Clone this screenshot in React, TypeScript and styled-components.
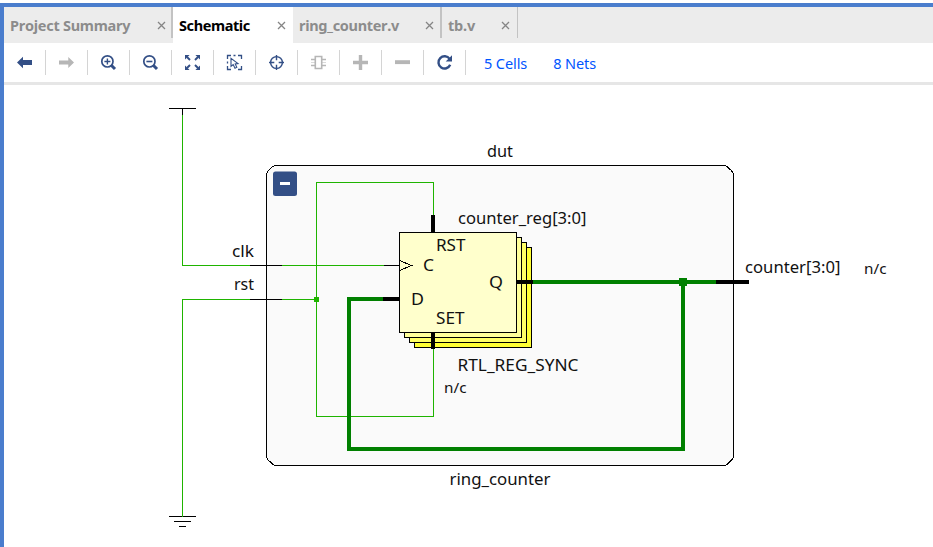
import React from "react";
import styled, { createGlobalStyle } from "styled-components";

const GlobalStyle = createGlobalStyle`
  html, body { margin: 0; padding: 0; background: #fff; overflow: hidden; }
  * { box-sizing: border-box; }
`;

const NAVY = "#334f86";
const GREY = "#b6b6b6";
const WIRE = "#1fb400";
const BUS = "#008000";

const Window = styled.main`
  display: flex;
  flex-direction: column;
  width: 933px;
  height: 544px;
  margin-top: 3px;
  border-top: 4px solid #4a7dcd;
  border-left: 4px solid #4a7dcd;
  background: #fff;
  font-family: "Noto Sans", "Open Sans", sans-serif;
`;

const TabBar = styled.nav`
  display: flex;
  flex: 0 0 36px;
  background: #ececec;
`;

const TabItem = styled.div<{ $width: number; $end: number; $active?: boolean }>`
  display: flex;
  align-items: center;
  justify-content: space-between;
  width: ${(p) => p.$width}px;
  height: 36px;
  padding: 0 ${(p) => p.$end}px 0 6px;
  background: ${(p) => (p.$active ? "#fff" : "transparent")};
  color: ${(p) => (p.$active ? "#000" : "#8c8c8c")};
`;

const TabLabel = styled.span<{ $spacing: number }>`
  font-size: 14.5px;
  font-weight: 700;
  line-height: 20px;
  white-space: nowrap;
  letter-spacing: ${(p) => p.$spacing}px;
  font-kerning: none;
`;

const CloseIcon = styled.svg`
  width: 9px;
  height: 9px;
  margin-top: 1px;
  flex: none;
`;

const TabDivider = styled.div<{ $width: number }>`
  width: ${(p) => p.$width}px;
  height: 31px;
  background: #c3c3c3;
`;

const Toolbar = styled.div`
  display: flex;
  align-items: center;
  flex: 0 0 42px;
  border-bottom: 3px solid #e6e6e6;
`;

const ToolButton = styled.button`
  display: flex;
  align-items: center;
  justify-content: center;
  width: 42px;
  height: 25px;
  padding: 0;
  border: 0;
  border-right: 1px solid #d4d4d4;
  background: none;
`;

const ToolIcon = styled.svg`
  width: 17px;
  height: 17px;
  display: block;
`;

const StatLink = styled.a<{ $left: number }>`
  margin: 0 0 0 ${(p) => p.$left}px;
  color: #0055ff;
  font-size: 14.5px;
  line-height: 20px;
  white-space: nowrap;
  letter-spacing: -0.1px;
`;

const Canvas = styled.svg`
  display: block;
  width: 929px;
  height: 462px;
  flex: none;
`;

const Lines = styled.g`
  shape-rendering: crispEdges;
  fill: none;
`;

const Label = styled.text<{ $small?: boolean }>`
  font-family: "Noto Sans", "Open Sans", sans-serif;
  font-size: ${(p) => (p.$small ? 14 : 16.5)}px;
  fill: #111;
`;

function Close() {
  return (
    <CloseIcon viewBox="0 0 9 9">
      <path d="M1 1 L8 8 M8 1 L1 8" stroke="#858585" strokeWidth="1.3" fill="none" />
    </CloseIcon>
  );
}

const tools: { name: string; art: React.ReactNode }[] = [
  { name: "Back", art: <path d="M1 8.5 L7 2.8 V6 H16 V11 H7 V14.2 Z" fill={NAVY} /> },
  { name: "Forward", art: <path d="M16 8.5 L10.3 3 V6.4 H1 V10.6 H10.3 V14 Z" fill={GREY} /> },
  {
    name: "Zoom in",
    art: (
      <g fill="none" stroke={NAVY}>
        <circle cx="7.4" cy="7.4" r="5.6" strokeWidth="1.7" />
        <path d="M11.5 11.5 L15 15" strokeWidth="3" />
        <path d="M4.4 7.5 H10.4 M7.4 4.5 V10.5" strokeWidth="1.4" />
      </g>
    ),
  },
  {
    name: "Zoom out",
    art: (
      <g fill="none" stroke={NAVY}>
        <circle cx="7.4" cy="7.4" r="5.6" strokeWidth="1.7" />
        <path d="M11.5 11.5 L15 15" strokeWidth="3" />
        <path d="M4.4 7.5 H10.4" strokeWidth="1.6" />
      </g>
    ),
  },
  {
    name: "Zoom fit",
    art: (
      <g fill={NAVY} stroke={NAVY}>
        <path d="M1 1 H5.6 L1 5.6 Z M16 1 V5.6 L11.4 1 Z M1 16 V11.4 L5.6 16 Z M16 16 H11.4 L16 11.4 Z" stroke="none" />
        <path d="M3 3 L6 6 M14 3 L11 6 M3 14 L6 11 M14 14 L11 11" strokeWidth="1.9" />
      </g>
    ),
  },
  {
    name: "Select area",
    art: (
      <g fill="none" stroke={NAVY} strokeWidth="1.3">
        <path d="M1.5 5 V1.5 H5 M12 1.5 H15.5 V5 M1.5 12 V15.5 H5 M12 15.5 H15.5 V12 M7.5 1.5 H9.5 M1.5 7.5 V9.5" />
        <path d="M5 4.3 V12.3 L7.2 10.6 L9 14.2 L10.8 13.3 L9.2 9.9 L12 9.6 Z" strokeWidth="1.1" />
      </g>
    ),
  },
  {
    name: "Auto fit selection",
    art: (
      <g fill="none" stroke={NAVY} strokeWidth="1.4">
        <circle cx="8.5" cy="8.5" r="5.9" />
        <path d="M8.5 1 V6.3 M8.5 10.7 V16 M1 8.5 H6.3 M10.7 8.5 H16" />
      </g>
    ),
  },
  {
    name: "Cell",
    art: (
      <g fill="none" stroke={GREY}>
        <path d="M5.3 2.5 H11.7 V14.5 H5.3 Z" strokeWidth="1.6" />
        <path d="M1 5.4 H5 M1 11.6 H5 M12 5.4 H16 M12 11.6 H16" strokeWidth="1.5" />
        <path d="M1 8.5 H5 M12 8.5 H16" strokeWidth="1" strokeOpacity="0.5" />
      </g>
    ),
  },
  { name: "Add", art: <path d="M1 6.8 H6.8 V1 H10.2 V6.8 H16 V10.2 H10.2 V16 H6.8 V10.2 H1 Z" fill={GREY} /> },
  { name: "Remove", art: <path d="M1 6.2 H16 V10.1 H1 Z" fill={GREY} /> },
  {
    name: "Refresh",
    art: (
      <g>
        <path d="M13.6 4.9 A6.1 6.1 0 1 0 14.2 10.8" fill="none" stroke={NAVY} strokeWidth="2.4" />
        <path d="M16 1.3 V7.6 H9.7 Z" fill={NAVY} />
      </g>
    ),
  },
];

const registerLayers = [
  { offset: 15, fill: "#ffff33" },
  { offset: 10, fill: "#ffff66" },
  { offset: 5, fill: "#ffff99" },
  { offset: 0, fill: "#ffffcc" },
];

const labels: { text: string; x: number; y: number; width: number; small?: boolean }[] = [
  { text: "dut", x: 487, y: 157, width: 26 },
  { text: "clk", x: 232, y: 257, width: 22 },
  { text: "rst", x: 234, y: 290, width: 20 },
  { text: "counter_reg[3:0]", x: 458, y: 224, width: 128.5 },
  { text: "RST", x: 436, y: 251, width: 29.5 },
  { text: "C", x: 423, y: 271, width: 11 },
  { text: "Q", x: 489, y: 288, width: 14 },
  { text: "D", x: 411, y: 305, width: 13 },
  { text: "SET", x: 436, y: 324, width: 28.5 },
  { text: "RTL_REG_SYNC", x: 457.5, y: 371, width: 121 },
  { text: "n/c", x: 444, y: 393, width: 22.5, small: true },
  { text: "counter[3:0]", x: 745, y: 273, width: 95.5 },
  { text: "n/c", x: 864, y: 274, width: 22.5, small: true },
  { text: "ring_counter", x: 449.5, y: 485, width: 101 },
];

function Schematic() {
  return (
    <Canvas viewBox="4 85 929 462">
      <Lines>
        <path
          d="M275.5 165.5 H724.5 Q726.5 165.5 729 168.5 Q733.5 172 733.5 174.5 V456.5 Q733.5 459 729.5 462 Q727 465.5 724.5 465.5 H275.5 Q273 465.5 270.5 462 Q266.5 459 266.5 456.5 V174.5 Q266.5 172 270.5 168.5 Q273 165.5 275.5 165.5 Z"
          fill="#fafafa"
          stroke="#000"
        />
        <path d="M169 108.5 H196 M182.5 108 V115 M169 516.5 H196 M174 521.5 H191 M179 526.5 H186" stroke="#000" />
        <path
          d="M182.5 115 V265.5 H384 M182.5 517 V299.5 H316.5 M433.5 215 V182.5 H316.5 V416.5 H433.5 V349"
          stroke={WIRE}
        />
        <path d="M250 265.5 H282 M250 299.5 H282 M384 265.5 H399" stroke="#000" />
        <path d="M314 297 H319 V302 H314 Z" fill={WIRE} />
        <path d="M383 299 H349 V449 H683 V282 M533 282 H716" stroke={BUS} strokeWidth="4" />
        <path d="M679 278 H687 V286 H679 Z" fill={BUS} />
        {registerLayers.map(({ offset, fill }) => (
          <rect
            key={offset}
            x={399.5 + offset}
            y={232.5 + offset}
            width="117"
            height="100"
            fill={fill}
            stroke="#000"
          />
        ))}
        <path d="M399.5 260.5 L411.5 265.5 L399.5 270.5" stroke="#000" />
        <path
          d="M433 215 V232 M433 332 V349 M383 299 H399 M517 282 H533 M716 282 H749"
          stroke="#000"
          strokeWidth="4"
        />
      </Lines>
      <rect x="273" y="171.6" width="24" height="24.4" rx="2.5" fill={NAVY} />
      <rect x="280" y="182" width="10" height="3" fill="#fff" />
      {labels.map(({ text, x, y, width, small }) => (
        <Label key={`${text}-${x}`} x={x} y={y} textLength={width} lengthAdjust="spacingAndGlyphs" $small={small}>
          {text}
        </Label>
      ))}
    </Canvas>
  );
}

export default function App() {
  return (
    <>
      <GlobalStyle />
      <Window>
        <TabBar>
          <TabItem $width={167} $end={5}>
            <TabLabel $spacing={-0.27}>Project Summary</TabLabel>
            <Close />
          </TabItem>
          <TabDivider $width={2} />
          <TabItem $width={120} $end={7} $active>
            <TabLabel $spacing={-0.4}>Schematic</TabLabel>
            <Close />
          </TabItem>
          <TabItem $width={147} $end={6}>
            <TabLabel $spacing={-0.33}>ring_counter.v</TabLabel>
            <Close />
          </TabItem>
          <TabDivider $width={2} />
          <TabItem $width={75} $end={7}>
            <TabLabel $spacing={-0.2}>tb.v</TabLabel>
            <Close />
          </TabItem>
          <TabDivider $width={1} />
        </TabBar>
        <Toolbar>
          {tools.map((tool) => (
            <ToolButton key={tool.name} aria-label={tool.name}>
              <ToolIcon viewBox="0 0 17 17">{tool.art}</ToolIcon>
            </ToolButton>
          ))}
          <StatLink $left={18}>5 Cells</StatLink>
          <StatLink $left={26}>8 Nets</StatLink>
        </Toolbar>
        <Schematic />
      </Window>
    </>
  );
}
